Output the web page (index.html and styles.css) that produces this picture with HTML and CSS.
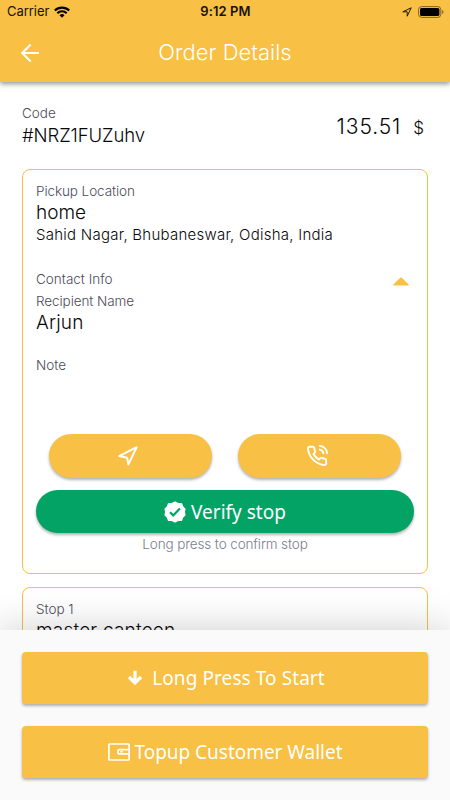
FILE: index.html
```html
<!DOCTYPE html>
<html lang="en">
<head>
<meta charset="utf-8">
<title>Order Details</title>
<link rel="stylesheet" href="styles.css">
</head>
<body>
<div class="screen">
  <header class="header">
    <div class="status">
      <div class="carrier"><span>Carrier</span>
        <svg width="16" height="12" viewBox="0 0 16 12" fill="none" stroke="#000" stroke-width="2.1"><path d="M.8 4.6a10.2 10.2 0 0 1 14.4 0M3.3 7.2a6.7 6.7 0 0 1 9.4 0"/><path d="M5.5 9.2a3.6 3.6 0 0 1 5 0L8 11.7z" fill="#000" stroke="none"/></svg>
      </div>
      <div class="time">9:12 PM</div>
      <div class="indicators">
        <svg width="10" height="10" viewBox="0 0 10 10" fill="none" stroke="#201a08" stroke-linejoin="round"><path d="M.8 4.8 9.2.8 5.2 9.2V4.8z"/></svg>
        <svg width="26" height="12" viewBox="0 0 26 12"><rect x=".6" y=".6" width="22.2" height="10.8" rx="3" fill="none" stroke="#80631f"/><rect x="2" y="2" width="19.4" height="8" rx="1.6"/><path d="M24.2 4v4q1.3-.7 1.3-2t-1.3-2" fill="#80631f"/></svg>
      </div>
    </div>
    <div class="appbar">
      <svg class="back" width="20" height="20" viewBox="0 0 20 20" fill="none" stroke="#fff" stroke-width="2.1"><path d="M19 10H2.2M10.7 1.5 2.2 10l8.5 8.5"/></svg>
      <h1 class="title">Order Details</h1>
      <span class="back"></span>
    </div>
  </header>

  <main class="content">
    <section class="summary">
      <div><div class="label code-label">Code</div><div class="value code">#NRZ1FUZuhv</div></div>
      <div class="price"><span class="amount">135.51</span><span class="currency">$</span></div>
    </section>

    <section class="card">
      <div class="label pickup">Pickup Location</div>
      <div class="value home">home</div>
      <div class="address">Sahid Nagar, Bhubaneswar, Odisha, India</div>
      <div class="contact">
        <div class="label contact-label">Contact Info</div>
        <svg width="16" height="9" viewBox="0 0 16 9"><path d="M8 .4q.4 0 .8.4l6.600 6.400q.8 1.200-.7 1.200H1.300Q-.2 8.400.6 7.200L7.200.8Q7.600.4 8 .4z" fill="#f8c044"/></svg>
      </div>
      <div class="label recipient">Recipient Name</div>
      <div class="value arjun">Arjun</div>
      <div class="label note">Note</div>
      <div class="actions">
        <button class="pill" aria-label="Navigate"><svg width="20" height="20" viewBox="0 0 20 20" fill="none" stroke="#fff" stroke-width="2" stroke-linejoin="round"><path d="M1.200 10.100 18.600 1.200 10.400 18.400 9.100 11.700z"/></svg></button>
        <button class="pill" aria-label="Call"><svg width="22" height="22" viewBox="0 0 24 24" fill="none" stroke="#fff" stroke-width="2.100" stroke-linecap="round" stroke-linejoin="round"><path d="M15.050 5A5 5 0 0 1 19 8.950M15.050 1A9 9 0 0 1 23 8.940M22 16.920v3a2 2 0 0 1-2.180 2 19.790 19.790 0 0 1-8.630-3.070 19.500 19.500 0 0 1-6-6 19.790 19.790 0 0 1-3.070-8.670A2 2 0 0 1 4.110 2h3a2 2 0 0 1 2 1.720c.127.960.361 1.903.700 2.810a2 2 0 0 1-.450 2.110L8.090 9.910a16 16 0 0 0 6 6l1.270-1.270a2 2 0 0 1 2.110-.450c.907.339 1.850.573 2.810.700A2 2 0 0 1 22 16.920z"/></svg></button>
      </div>
      <button class="verify"><svg width="22" height="22" viewBox="0 0 22 22"><path d="M11 1.400 13.900 2.900H17.300L18.500 6 20.700 8.100 20 11 20.700 13.900 18.500 16 17.300 19.100H13.900L11 20.600 8.100 19.100H4.700L3.500 16 1.300 13.900 2 11 1.300 8.100 3.500 6 4.700 2.900H8.100z" fill="#fff" stroke="#fff" stroke-linejoin="round" stroke-width="1.800"/><path d="m6 11.200 3.200 3.200 6.700-6.900" fill="none" stroke="#03a366" stroke-width="2.200"/></svg><span>Verify stop</span></button>
      <div class="hint"><span>Long press to confirm stop</span></div>
    </section>

    <section class="card next">
      <div class="label stop">Stop 1</div>
      <div class="value master">master canteen</div>
    </section>
  </main>

  <footer class="footer">
    <button class="cta start"><svg width="16" height="16" viewBox="0 0 16 16" fill="none" stroke="#fff" stroke-width="3.200"><path d="M8 .8v12M2 7l6 6 6-6"/></svg><span>Long Press To Start</span></button>
    <button class="cta topup"><svg width="22" height="18" viewBox="0 0 22 18" fill="none" stroke="#fff" stroke-width="1.700" stroke-linejoin="round"><rect x=".9" y="1" width="20.200" height="16" rx=".7"/><path d="M21 6.700H11Q10 6.700 10 7.700v2.200q0 1 1 1H21"/><path d="M12.200 8.800h2.600" stroke-width="1.500"/></svg><span>Topup Customer Wallet</span></button>
  </footer>
</div>
</body>
</html>
```
FILE: styles.css
```css
* { box-sizing: border-box; }
body { margin: 0; background: #fff; font-family: Inter, sans-serif; }
button { border: 0; padding: 0; margin: 0; font: inherit; font-family: "Noto Sans", sans-serif; color: #fff; display: flex; align-items: center; justify-content: center; white-space: nowrap; }
svg { display: block; flex: none; }
.screen { width: 450px; height: 800px; display: flex; flex-direction: column; overflow: hidden; }
.header { position: relative; height: 82px; flex: none; background: #f8c044; box-shadow: 0 2px 5px rgba(0,0,0,.42); }
.status { height: 23px; padding: 0 6px 0 7px; display: grid; grid-template-columns: 1fr auto 1fr; align-items: center; font: 400 13px/23px Inter, sans-serif; color: #15120a; }
.carrier { display: flex; align-items: center; gap: 5px; letter-spacing: -.05px; }
.time { font-weight: 600; font-size: 13px; letter-spacing: .1px; }
.indicators { display: flex; align-items: center; justify-content: flex-end; gap: 6px; }
.appbar { height: 59px; padding: 0 20px; display: flex; align-items: center; justify-content: space-between; }
.back { width: 20px; margin-top: 1px; }
.title { margin: 0 0 2px; font-weight: 300; font-size: 22px; line-height: 30px; color: #fff; }
.content { flex: 1; min-height: 0; padding: 20px 22px 0; overflow: hidden; }
.summary { height: 67px; display: flex; justify-content: space-between; }
.label { font-weight: 300; font-size: 13.500px; line-height: 22px; color: #4d4b59; white-space: nowrap; }
.pickup, .recipient { letter-spacing: -.08px; }
.value { font-weight: 300; font-size: 19px; line-height: 22px; color: #08080a; white-space: nowrap; }
.code { font-size: 18.500px; letter-spacing: -.1px; }
.arjun { letter-spacing: .2px; }
.master { letter-spacing: .2px; }
.price { padding: 12px 4px 0 0; display: flex; align-items: baseline; gap: 12px; font-weight: 300; line-height: 26px; color: #08080a; height: 38px; }
.amount { font-size: 21px; letter-spacing: .9px; }
.currency { font-size: 17px; }
.card { height: 405px; padding: 10px 13px 0; border: 1px solid #f8c044; border-radius: 8px; }
.address { font-weight: 300; font-size: 15px; line-height: 22px; letter-spacing: .25px; color: #08080a; white-space: nowrap; }
.contact { margin-top: 22px; display: flex; justify-content: space-between; align-items: center; padding-right: 5px; }
.contact svg { margin-top: 5px; }
.note { margin-top: 20px; }
.actions { margin-top: 58px; padding: 0 13px; display: flex; gap: 26px; }
.pill { flex: 1; height: 44px; padding-right: 5px; border-radius: 22px; background: #f8c044; box-shadow: 0 2px 3px rgba(0,0,0,.3); }
.verify { width: 100%; height: 43px; margin-top: 12px; border-radius: 22px; background: #03a366; box-shadow: 0 2px 3px rgba(0,0,0,.3); gap: 5px; font-size: 19px; }
.hint { line-height: 22px; font-size: 13.500px; letter-spacing: -.12px; font-weight: 300; color: #787e8d; text-align: center; }
.next { margin-top: 13px; height: 200px; }
.footer { position: relative; height: 170px; flex: none; padding: 22px 22px 0; background: #fafafa; box-shadow: 0 0 40px rgba(0,0,0,.2); display: flex; flex-direction: column; gap: 22px; }
.cta { height: 52px; border-radius: 4px; background: #f8c044; box-shadow: 0 2px 3px rgba(0,0,0,.3); font-size: 19px; }
.start { gap: 9px; padding-left: 2px; letter-spacing: .08px; }
.topup { gap: 5px; letter-spacing: -.03px; }
```
